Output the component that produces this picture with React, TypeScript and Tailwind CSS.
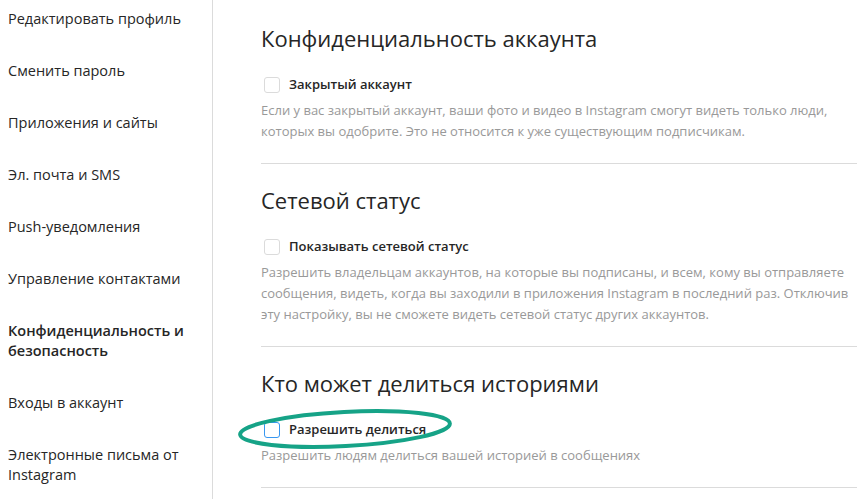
import React from "react";

const menu: { label: string; active?: boolean }[] = [
  { label: "Редактировать профиль" },
  { label: "Сменить пароль" },
  { label: "Приложения и сайты" },
  { label: "Эл. почта и SMS" },
  { label: "Push-уведомления" },
  { label: "Управление контактами" },
  { label: "Конфиденциальность и безопасность", active: true },
  { label: "Входы в аккаунт" },
  { label: "Электронные письма от Instagram" },
];

function Section({
  title,
  label,
  desc,
  highlight,
}: {
  title: string;
  label: string;
  desc: string;
  highlight?: boolean;
}) {
  return (
    <div className="relative border-b border-[#dbdbdb] pt-[23px] pb-[21px]">
      <h2 className="text-[22px] leading-[26px] font-normal text-[#262626]">{title}</h2>
      <div className="mt-[24px] flex h-5 items-center">
        <div
          className={
            "ml-[3px] h-4 w-4 rounded-[3px] border bg-white " +
            (highlight ? "border-[#3897f0]" : "border-[#dbdbdb]")
          }
        />
        <span className="ml-[9px] text-[13px] font-semibold text-[#262626]">{label}</span>
      </div>
      <p className="mt-[5px] text-[13px] leading-[21px] text-[#999999]">{desc}</p>
      {highlight && (
        <svg
          className="pointer-events-none absolute left-[-26px] top-[55px]"
          width="224"
          height="56"
          viewBox="0 0 224 56"
        >
          <ellipse
            cx="110"
            cy="27"
            rx="105"
            ry="17"
            transform="rotate(-3 110 27)"
            fill="none"
            stroke="#16a387"
            strokeWidth="4"
          />
        </svg>
      )}
    </div>
  );
}

export default function App() {
  return (
    <div
      className="flex h-[499px] w-[857px] overflow-hidden bg-white"
      style={{ fontFamily: '"Open Sans", "Noto Sans", sans-serif' }}
    >
      <nav className="w-[213px] shrink-0 border-r border-[#dbdbdb]">
        {menu.map((m) => (
          <div
            key={m.label}
            className={
              "pl-2 pr-4 pt-[9px] pb-[23px] text-[14.5px] leading-5 text-[#262626] " +
              (m.active ? "font-semibold" : "font-normal")
            }
          >
            {m.label}
          </div>
        ))}
      </nav>
      <main className="flex-1 pl-[48px] pt-[2px]">
        <Section
          title="Конфиденциальность аккаунта"
          label="Закрытый аккаунт"
          desc="Если у вас закрытый аккаунт, ваши фото и видео в Instagram смогут видеть только люди, которых вы одобрите. Это не относится к уже существующим подписчикам."
        />
        <Section
          title="Сетевой статус"
          label="Показывать сетевой статус"
          desc="Разрешить владельцам аккаунтов, на которые вы подписаны, и всем, кому вы отправляете сообщения, видеть, когда вы заходили в приложения Instagram в последний раз. Отключив эту настройку, вы не сможете видеть сетевой статус других аккаунтов."
        />
        <Section
          title="Кто может делиться историями"
          label="Разрешить делиться"
          desc="Разрешить людям делиться вашей историей в сообщениях"
          highlight
        />
      </main>
    </div>
  );
}
